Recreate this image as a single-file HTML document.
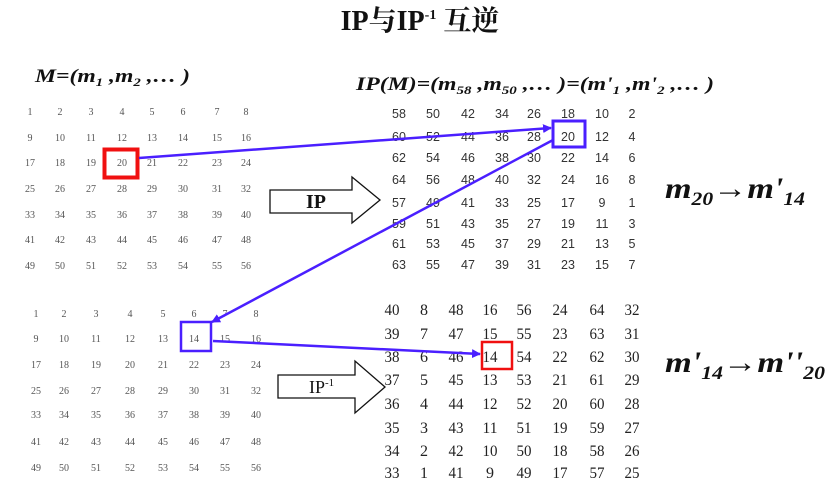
<!DOCTYPE html>
<html><head><meta charset="utf-8"><style>
html,body{margin:0;padding:0;background:#fff;width:839px;height:494px;overflow:hidden}
svg{display:block}
.s{font-family:"Liberation Serif",serif;font-size:10px;fill:#555}
.a{font-family:"Liberation Sans",sans-serif;font-size:12.5px;fill:#333}
.c{font-family:"Liberation Serif",serif;font-size:16px;fill:#222}
.f{font-family:"Liberation Serif",serif;font-style:italic;font-weight:bold;fill:#111}
</style></head><body>
<svg width="839" height="494" xmlns="http://www.w3.org/2000/svg">
<defs><marker id="ah" markerWidth="9" markerHeight="9" refX="8" refY="4.5" orient="auto" markerUnits="userSpaceOnUse"><path d="M0,0 L9,4.5 L0,9 z" fill="#4a1fff"/></marker></defs>
<text x="420" y="30" text-anchor="middle" font-family="'Liberation Serif','Noto Serif CJK SC',serif" font-weight="bold" font-size="28" fill="#111">IP与IP<tspan font-size="14" dy="-11">-1</tspan><tspan dy="11"> 互逆</tspan></text>
<text class="f" x="35" y="82" font-size="19" textLength="155" lengthAdjust="spacingAndGlyphs">M=(m<tspan font-size="12" dy="4">1</tspan><tspan dy="-4"> ,m</tspan><tspan font-size="12" dy="4">2</tspan><tspan dy="-4"> ,… )</tspan></text>
<text class="f" x="356" y="90" font-size="19" textLength="358" lengthAdjust="spacingAndGlyphs">IP(M)=(m<tspan font-size="12" dy="4">58</tspan><tspan dy="-4"> ,m</tspan><tspan font-size="12" dy="4">50</tspan><tspan dy="-4"> ,… )=(m'</tspan><tspan font-size="12" dy="4">1</tspan><tspan dy="-4"> ,m'</tspan><tspan font-size="12" dy="4">2</tspan><tspan dy="-4"> ,… )</tspan></text>
<text class="f" x="665" y="198" font-size="30" textLength="140" lengthAdjust="spacingAndGlyphs">m<tspan font-size="19" dy="7">20</tspan><tspan dy="-7">→m'</tspan><tspan font-size="19" dy="7">14</tspan></text>
<text class="f" x="665" y="372" font-size="30" textLength="160" lengthAdjust="spacingAndGlyphs">m'<tspan font-size="19" dy="7">14</tspan><tspan dy="-7">→m''</tspan><tspan font-size="19" dy="7">20</tspan></text>
<path d="M270,190 H352 V177 L380,200 L352,223 V213 H270 Z" fill="#fff" stroke="#111" stroke-width="1.3"/>
<text x="306" y="208" font-family="'Liberation Serif',serif" font-weight="bold" font-size="20" fill="#111">IP</text>
<path d="M278,375 H355 V361 L385,387 L355,413 V398 H278 Z" fill="#fff" stroke="#111" stroke-width="1.3"/>
<text x="309" y="393" font-family="'Liberation Serif',serif" font-size="18" fill="#111">IP<tspan font-size="11" dy="-7">-1</tspan></text>
<rect x="104.5" y="149.5" width="33" height="28" fill="none" stroke="#f01010" stroke-width="4"/>
<rect x="553" y="121" width="32" height="26" fill="none" stroke="#4a1fff" stroke-width="3"/>
<rect x="181" y="322" width="30" height="29" fill="none" stroke="#4a1fff" stroke-width="2.5"/>
<rect x="482" y="342" width="30" height="27" fill="none" stroke="#f01010" stroke-width="2.5"/>
<line x1="139" y1="158" x2="551" y2="128" stroke="#4a1fff" stroke-width="2.5" marker-end="url(#ah)"/>
<line x1="553" y1="140" x2="212" y2="322" stroke="#4a1fff" stroke-width="2.5" marker-end="url(#ah)"/>
<line x1="213" y1="341" x2="480" y2="354" stroke="#4a1fff" stroke-width="2.5" marker-end="url(#ah)"/>
</svg>
<script>
const svg=document.querySelector('svg'),NS='http://www.w3.org/2000/svg';
function t(x,y,s,c){const e=document.createElementNS(NS,'text');e.setAttribute('x',x);e.setAttribute('y',y);e.setAttribute('text-anchor','middle');e.setAttribute('class',c);e.textContent=s;svg.insertBefore(e,svg.querySelector('rect'));return e;}
let cx=[30,60,91,122,152,183,217,246],ry=[115,141,166,192,218,243,269];
for(let r=0;r<7;r++)for(let c=0;c<8;c++)t(cx[c],ry[r],r*8+c+1,'s');
let cx2=[36,64,96,130,163,194,225,256],ry2=[317,342,368,394,418,445,471];
for(let r=0;r<7;r++)for(let c=0;c<8;c++)t(cx2[c],ry2[r],r*8+c+1,'s');
const ip=[58,50,42,34,26,18,10,2,60,52,44,36,28,20,12,4,62,54,46,38,30,22,14,6,64,56,48,40,32,24,16,8,57,49,41,33,25,17,9,1,59,51,43,35,27,19,11,3,61,53,45,37,29,21,13,5,63,55,47,39,31,23,15,7];
let cx3=[399,433,468,502,534,568,602,632],ry3=[118,141,162,184,207,228,248,269];
for(let i=0;i<64;i++)t(cx3[i%8],ry3[i>>3],ip[i],'a');
const inv=[40,8,48,16,56,24,64,32,39,7,47,15,55,23,63,31,38,6,46,14,54,22,62,30,37,5,45,13,53,21,61,29,36,4,44,12,52,20,60,28,35,3,43,11,51,19,59,27,34,2,42,10,50,18,58,26,33,1,41,9,49,17,57,25];
let cx4=[392,424,456,490,524,560,597,632],ry4=[315,339,362,385,409,433,456,478];
for(let i=0;i<64;i++){const e=t(cx4[i%8],ry4[i>>3],inv[i],'c');e.setAttribute('textLength',String(inv[i]).length>1?15:8);e.setAttribute('lengthAdjust','spacingAndGlyphs');}
</script>
</body></html>
